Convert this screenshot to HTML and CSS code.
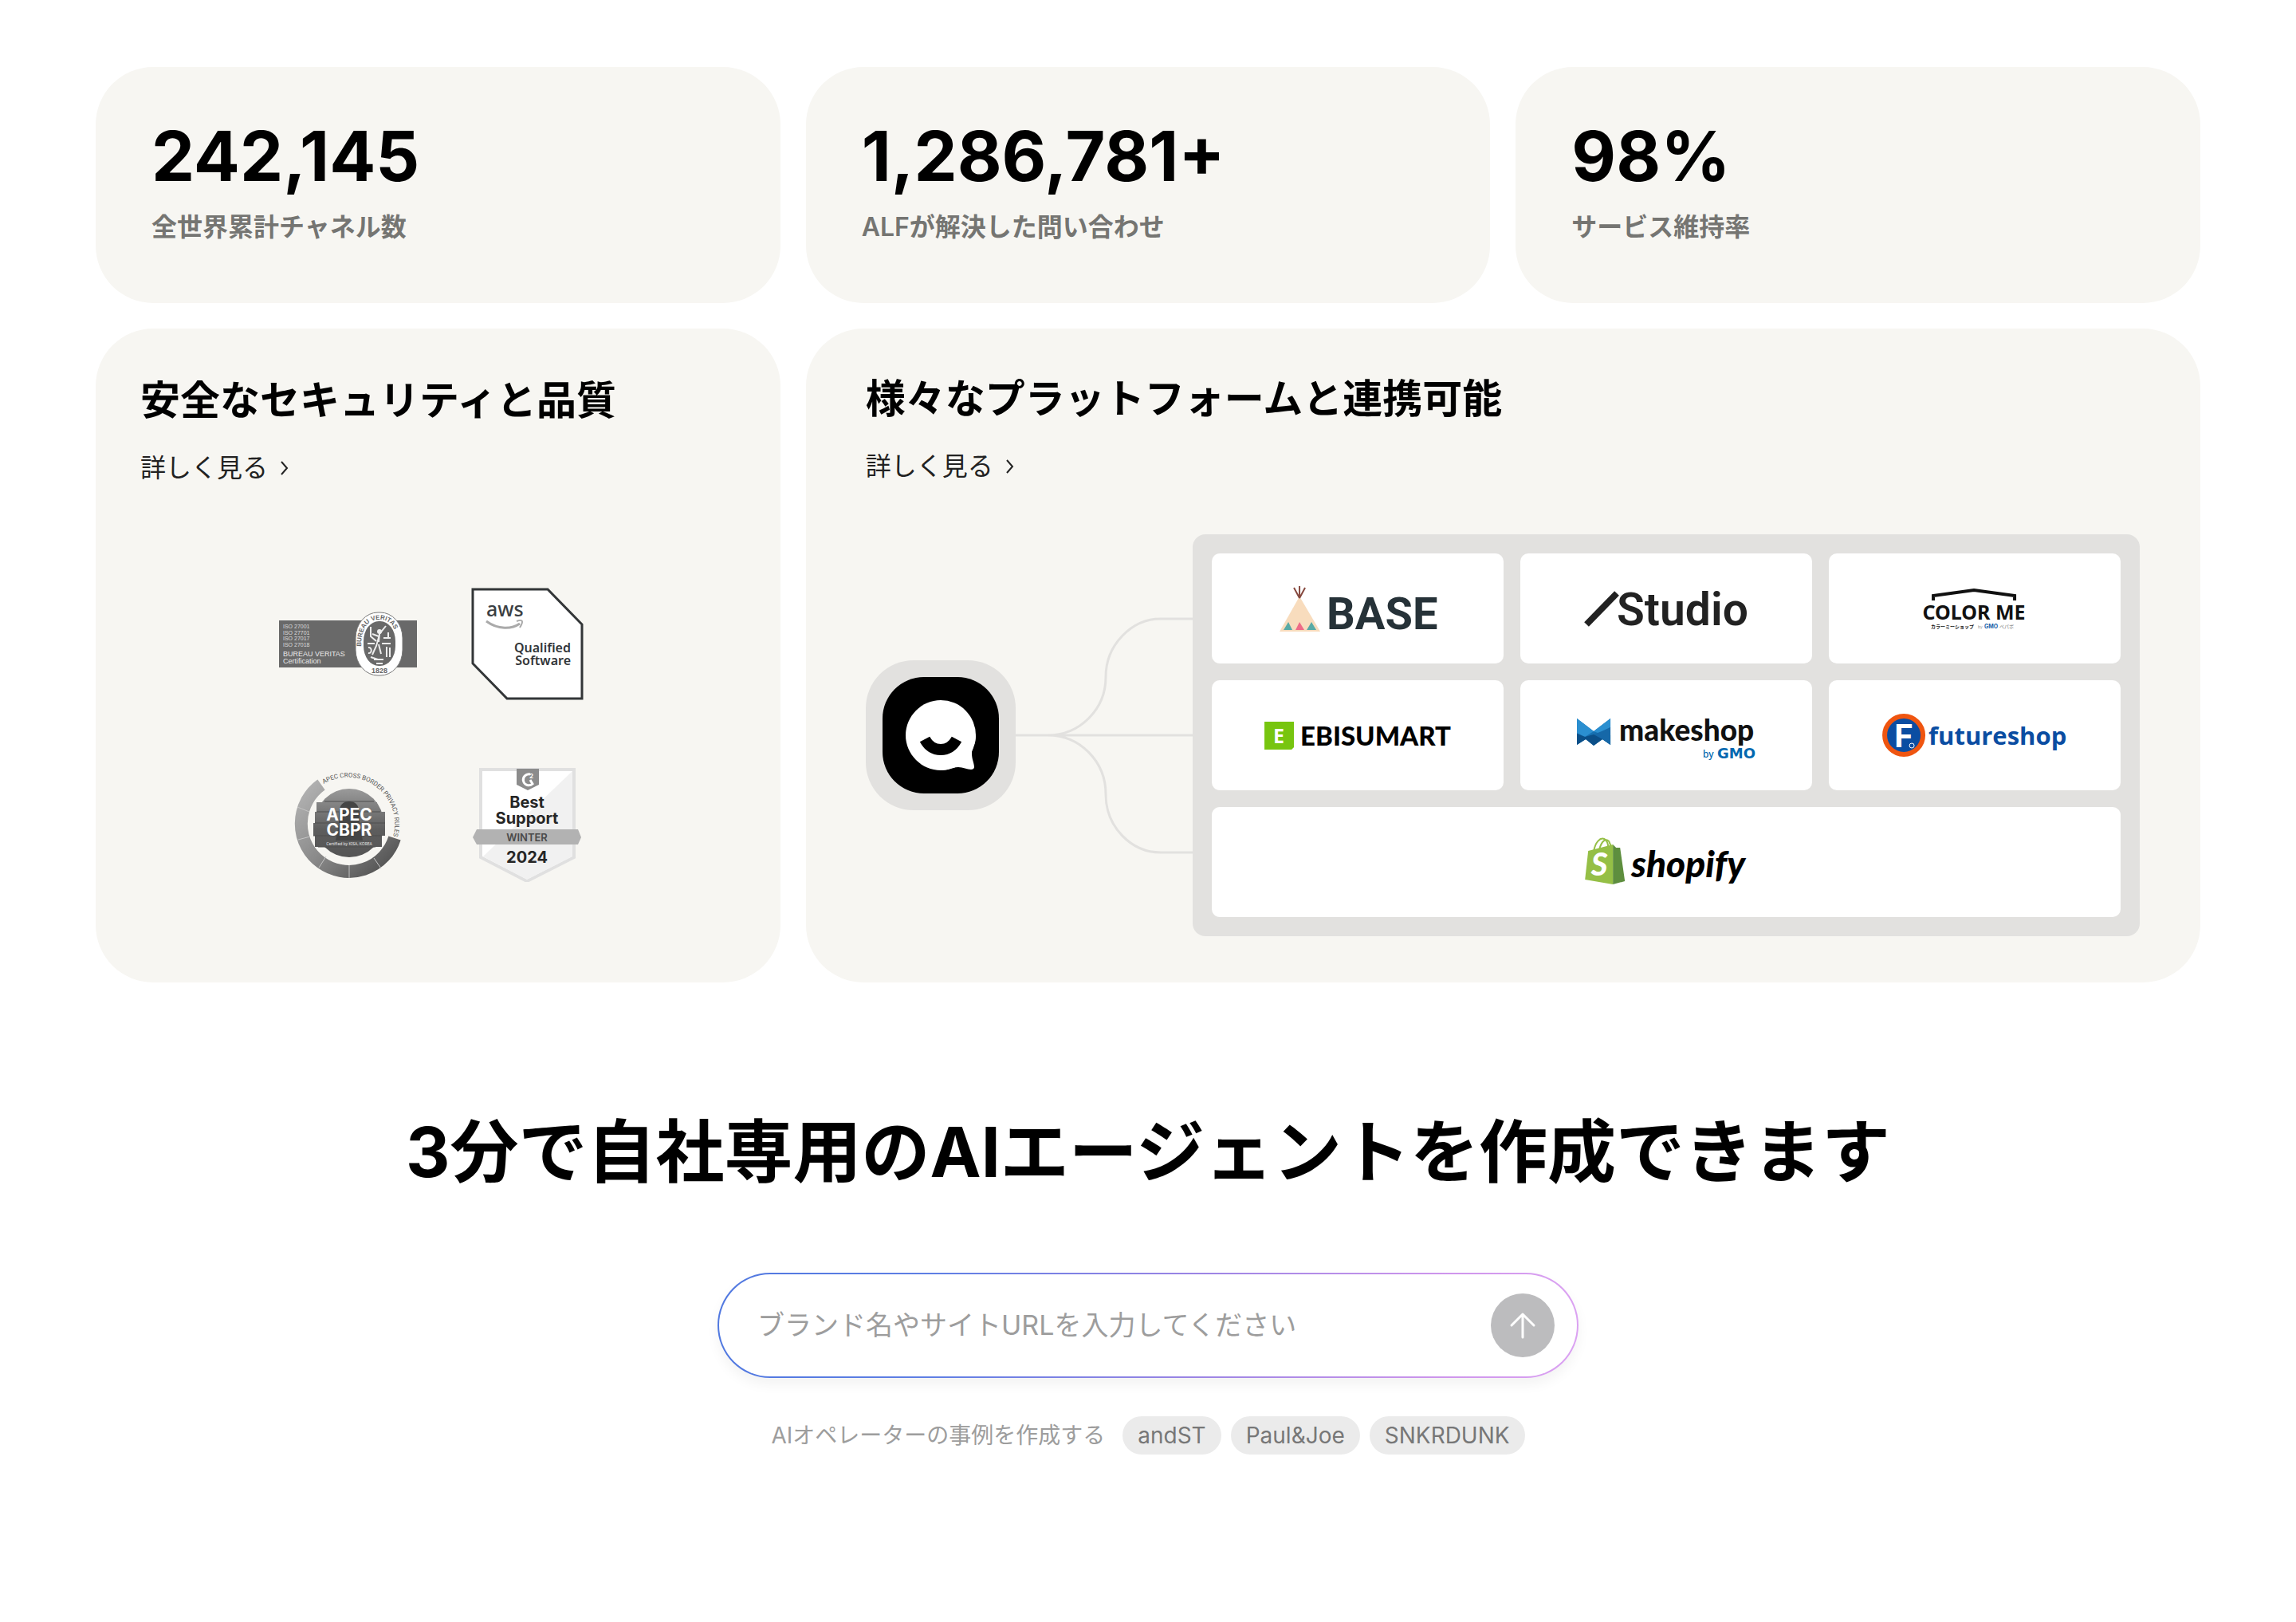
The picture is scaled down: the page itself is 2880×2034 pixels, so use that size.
FILE: index.html
```html
<!DOCTYPE html>
<html lang="ja">
<head>
<meta charset="utf-8">
<meta name="viewport" content="width=device-width, initial-scale=1">
<title>AIエージェント</title>
<link rel="stylesheet" href="styles.css">
</head>
<body>
<main class="page">
  <section class="cards">
    <div class="card stat">
      <p class="stat-value">242,145</p>
      <p class="stat-label">全世界累計チャネル数</p>
    </div>
    <div class="card stat">
      <p class="stat-value">1,286,781+</p>
      <p class="stat-label">ALFが解決した問い合わせ</p>
    </div>
    <div class="card stat">
      <p class="stat-value">98%</p>
      <p class="stat-label">サービス維持率</p>
    </div>

    <article class="card security">
      <h2 class="card-title">安全なセキュリティと品質</h2>
      <a class="more" href="#security">詳しく見る
        <svg class="chevron" viewBox="0 0 12 18" aria-hidden="true"><path d="M2 1l7 8-7 8"/></svg>
      </a>
      <div class="badges">
        <svg class="badge" viewBox="0 0 176 144" role="img" aria-label="Bureau Veritas">
          <rect x="1" y="42" width="173" height="59" fill="#696969"/>
          <g class="sans" fill="#dcdcdc" font-size="7">
            <text x="6" y="52">ISO 27001</text>
            <text x="6" y="60">ISO 27701</text>
            <text x="6" y="67">ISO 27017</text>
            <text x="6" y="75">ISO 27018</text>
          </g>
          <g class="sans" fill="#eaeaea" font-size="9">
            <text x="6" y="87">BUREAU VERITAS</text>
            <text x="6" y="96">Certification</text>
          </g>
          <rect x="97" y="32" width="59" height="79" rx="28" ry="32" fill="#fff" stroke="#777"/>
          <rect x="107" y="43" width="40" height="56" rx="19" ry="25" fill="#696969"/>
          <path id="bv-ring" d="M104 75C104 52 112 41 127 41S149 52 149 75" fill="none"/>
          <text class="sans" font-size="8" font-weight="700" fill="#666"><textPath href="#bv-ring">BUREAU VERITAS</textPath></text>
          <text class="sans" x="127" y="108" text-anchor="middle" font-size="9" font-weight="700" fill="#666">1828</text>
          <g fill="none" stroke="#eee" stroke-width="2">
            <path d="M116 50v12l7 6M135 49l-8 10-1 10M127 60l-4 14-5 11M126 72l3 12M118 59l8 3"/>
            <path d="M112 71h9M130 71h11M113 76c5-1 5 8 0 7M136 75v13M140 76v12M132 64h9M138 57v8M120 91h12M123 96h8M116 88l9 3"/>
          </g>
          <circle cx="127" cy="56" r="3" fill="#eee"/>
        </svg>
        <svg class="badge" viewBox="0 0 176 144" role="img" aria-label="AWS Qualified Software">
          <path d="M20 3h94l43 44v93H63l-43-44z" fill="#fff" stroke="#333638" stroke-width="3"/>
          <text class="noto" x="37" y="37" font-size="25" font-weight="500" fill="#3b3f44">aws</text>
          <path d="M37 43c15 11 32 10 42 3" fill="none" stroke="#aaa" stroke-width="3"/>
          <path d="M75 43c8-3 9 0 4 8" fill="none" stroke="#aaa" stroke-width="2"/>
          <g class="noto" font-size="16" font-weight="600" fill="#333639" text-anchor="end">
            <text x="143" y="82">Qualified</text>
            <text x="143" y="98">Software</text>
          </g>
        </svg>
        <svg class="badge" viewBox="0 0 176 144" role="img" aria-label="APEC CBPR">
          <defs>
            <linearGradient id="ring" x1="0" y1="0" x2="1" y2="1">
              <stop offset="0" stop-color="#b4b4b4"/><stop offset="0.5" stop-color="#8a8a8a"/><stop offset="1" stop-color="#4c4c4c"/>
            </linearGradient>
            <linearGradient id="globe" gradientUnits="userSpaceOnUse" x1="0" y1="27" x2="0" y2="113">
              <stop offset="0" stop-color="#9a9a9a"/><stop offset="0.6" stop-color="#5d5d5d"/><stop offset="1" stop-color="#555"/>
            </linearGradient>
            <path id="apec-arc" d="M57 21A59 59 0 0 1 140 98"/>
          </defs>
          <path d="M54 22A60 60 0 1 0 146 89" fill="none" stroke="url(#ring)" stroke-width="16"/>
          <path d="M24 50l15 6M25 91l15-4M51 126l9-14M89 139v-16M129 127l-9-13" stroke="#c4c4c4"/>
          <g fill="url(#globe)">
            <circle cx="89" cy="70" r="43"/>
            <rect x="48" y="44" width="76" height="12"/>
            <rect x="46" y="56" width="88" height="14"/>
            <rect x="44" y="70" width="90" height="16"/>
            <rect x="46" y="86" width="84" height="14"/>
          </g>
          <path d="M58 43h62M48 56h80M46 70h88M44 86h86M50 100h72" stroke="#4f4f4f"/>
          <path d="M76 60q0-17 13-17t13 17v12l4 20H72l4-20z" fill="#454545"/>
          <g class="inter" fill="#fff" font-weight="700" font-size="21" text-anchor="middle">
            <text x="89" y="67">APEC</text>
            <text x="89" y="86">CBPR</text>
          </g>
          <text class="noto" x="89" y="98" font-size="5" fill="#e8e8e8" text-anchor="middle">Certified by KISA, KOREA</text>
          <text class="roboto" font-size="8" fill="#555"><textPath href="#apec-arc">APEC CROSS BORDER PRIVACY RULES</textPath></text>
        </svg>
        <svg class="badge" viewBox="0 0 176 144" role="img" aria-label="G2 Best Support Winter 2024">
          <path d="M30 3h117v110l-59 30-58-30z" fill="#fff" stroke="#e0e0e0" stroke-width="4"/>
          <path d="M145 5v107l-57 29-55-29z" fill="#f1f1f1"/>
          <path d="M75 2h28v20l-14 7-14-7z" fill="#8c8c8c"/>
          <path d="M92 9a7 7 0 1 0 3 12l-3-5" fill="none" stroke="#fff" stroke-width="3"/>
          <text class="inter" x="91" y="14" font-size="8" font-weight="700" fill="#fff">2</text>
          <g class="inter" fill="#262626" font-weight="700" font-size="20" text-anchor="middle">
            <text x="88" y="51">Best</text>
            <text x="88" y="71">Support</text>
            <text x="88" y="120">2024</text>
          </g>
          <path d="M25 78h127l4 10-4 9H25l-5-9z" fill="#b2b2b2"/>
          <text class="inter" x="88" y="93" font-size="13" font-weight="600" fill="#4a4a4a" text-anchor="middle">WINTER</text>
        </svg>
      </div>
    </article>

    <article class="card platforms">
      <h2 class="card-title">様々なプラットフォームと連携可能</h2>
      <a class="more" href="#platforms">詳しく見る
        <svg class="chevron" viewBox="0 0 12 18" aria-hidden="true"><path d="M2 1l7 8-7 8"/></svg>
      </a>
      <div class="diagram">
        <div class="hub">
          <svg viewBox="0 0 146 146" role="img" aria-label="Channel">
            <rect width="146" height="146" rx="52" fill="#000"/>
            <path d="M73 29a44 44 0 1 1 0 88c-24 0-44-20-44-44s20-44 44-44z" fill="#fff"/>
            <path d="M117 73c0 12-5 14-5 23 0 7 3 12 3 17 0 2-2 3-4 3-5 0-10-3-16-3-9 0-12 4-22 4z" fill="#fff"/>
            <path d="M53 78q7 13 20 13t20-13" fill="none" stroke="#000" stroke-width="14"/>
          </svg>
        </div>
        <svg class="links" viewBox="0 0 222 504" aria-hidden="true">
          <path d="M0 252h222M40 252C81 252 113 219 113 179S145 106 182 106h40M40 252C81 252 113 285 113 326S145 399 182 399h40"/>
        </svg>
        <div class="tiles">
          <div class="tile">
            <svg viewBox="0 0 366 138" role="img" aria-label="BASE">
              <path d="M110 54L136 98H85z" fill="#f8dcbd"/>
              <path d="M110 56V41M110 56l-7-13M110 56l7-13" fill="none" stroke="#86493f" stroke-width="2"/>
              <path d="M90 96l6-10 5 10zM119 96l6-10 6 10z" fill="#58aaa6"/>
              <path d="M105 96l5-10 6 10z" fill="#ee6b87"/>
              <text class="roboto" x="144" y="95" font-size="56" font-weight="700" fill="#263238">BASE</text>
            </svg>
          </div>
          <div class="tile">
            <svg viewBox="0 0 366 138" role="img" aria-label="Studio">
              <path d="M83 89l38-39" stroke="#222" stroke-width="8"/>
              <text class="roboto" x="121" y="90" font-size="57" font-weight="600" fill="#222">Studio</text>
            </svg>
          </div>
          <div class="tile">
            <svg viewBox="0 0 366 138" role="img" aria-label="COLOR ME">
              <path d="M131 59v-6l51-7 51 7v6" fill="none" stroke="#111" stroke-width="4"/>
              <text class="noto" x="182" y="83" font-size="25" font-weight="700" fill="#111" text-anchor="middle">COLOR ME</text>
              <text class="inter" x="128" y="94" font-size="6" font-weight="700" fill="#111">カラーミーショップ</text>
              <text class="inter" x="187" y="94" font-size="5" fill="#999">by</text>
              <text class="inter" x="195" y="94" font-size="7" font-weight="700" fill="#1a5fa8">GMO</text>
              <text class="inter" x="214" y="94" font-size="6" fill="#777">ペパボ</text>
            </svg>
          </div>
          <div class="tile">
            <svg viewBox="0 0 366 138" role="img" aria-label="EBISUMART">
              <path d="M66 52h37v32l-3 3H66z" fill="#77c50f"/>
              <text class="noto" x="84" y="79" font-size="25" font-weight="700" fill="#fff" text-anchor="middle">E</text>
              <text class="lato" x="111" y="82" font-size="33" font-weight="900" fill="#000">EBISUMART</text>
            </svg>
          </div>
          <div class="tile">
            <svg viewBox="0 0 366 138" role="img" aria-label="makeshop by GMO">
              <path d="M71 48l21 16 21-16v33l-10-7-11 8-10-8-11 7z" fill="#1670b1"/>
              <path d="M71 48l21 16-11 7-10-5zM113 48L92 64l10 4 11-9z" fill="#2b8fd0"/>
              <path d="M71 67l10 4 11-3 21 1v12l-10-7-11 8-10-8-11 7z" fill="#0b4f88"/>
              <path d="M92 68l10-4 11-5v22l-10-7z" fill="#1668a8"/>
              <text class="lato" x="124" y="76" font-size="37" font-weight="900" fill="#111">makeshop</text>
              <text class="noto" x="229" y="97" font-size="12" font-weight="500" fill="#0068b0">by</text>
              <text class="dejavu" x="295" y="98" font-size="18" font-weight="700" fill="#0068b0" text-anchor="end">GMO</text>
            </svg>
          </div>
          <div class="tile">
            <svg viewBox="0 0 366 138" role="img" aria-label="futureshop">
              <circle cx="94" cy="69" r="24" fill="#0a4da2" stroke="#ef5510" stroke-width="6"/>
              <text class="inter" x="94" y="84" font-size="40" font-weight="700" fill="#fff" text-anchor="middle">F</text>
              <circle cx="104" cy="82" r="3" fill="none" stroke="#fff"/>
              <text class="open" x="125" y="81" font-size="31" font-weight="700" fill="#0a4da2">futureshop</text>
            </svg>
          </div>
          <div class="tile tile-wide">
            <svg viewBox="0 0 366 138" role="img" aria-label="shopify">
              <path d="M92 55c2-11 8-17 13-15 4 2 5 6 5 11M99 53c3-11 8-14 12-10l3 7" fill="none" stroke="#95bf46" stroke-width="2"/>
              <path d="M85 55l31-8v50l-35-6z" fill="#95bf46"/>
              <path d="M116 47l4 4h5l6 42-15 4z" fill="#5e8e3e"/>
              <text class="lato" x="99" y="86" font-size="40" font-weight="900" font-style="italic" fill="#fff" text-anchor="middle">S</text>
              <text class="lato" x="139" y="88" font-size="46" font-weight="900" font-style="italic" fill="#000">shopify</text>
            </svg>
          </div>
        </div>
      </div>
    </article>
  </section>

  <section class="cta">
    <h1 class="cta-title">3分で自社専用のAIエージェントを作成できます</h1>
    <form class="prompt">
      <input class="prompt-input" type="text" placeholder="ブランド名やサイトURLを入力してください" aria-label="ブランド名やサイトURL">
      <button class="prompt-send" type="button" aria-label="送信">
        <svg viewBox="0 0 36 36" aria-hidden="true"><path d="M18 33V4M4 18L18 4l14 14"/></svg>
      </button>
    </form>
    <div class="examples">
      <span class="examples-label">AIオペレーターの事例を作成する</span>
      <button class="pill" type="button">andST</button>
      <button class="pill" type="button">Paul&amp;Joe</button>
      <button class="pill" type="button">SNKRDUNK</button>
    </div>
  </section>
</main>
</body>
</html>
```
FILE: styles.css
```css
*,
*::before,
*::after {
  box-sizing: border-box;
}

body {
  margin: 0;
  background: #fff;
  color: #000;
  font-family: Inter, "Noto Sans CJK JP", sans-serif;
}

h1,
h2,
p {
  margin: 0;
}

button,
input {
  font: inherit;
}

.page {
  padding: 84px 120px;
}

.cards {
  display: grid;
  grid-template-columns: repeat(3, minmax(0, 1fr));
  gap: 32px;
}

.card {
  border-radius: 72px;
  background: #f7f6f2;
}

.stat {
  display: flex;
  flex-direction: column;
  gap: 13px;
  padding: 60px 70px 71px;
}

.stat-value {
  font-size: 86px;
  font-weight: 700;
  line-height: 104px;
}

.stat-label {
  color: #757572;
  font-size: 32px;
  font-weight: 600;
  line-height: 48px;
}

.security,
.platforms {
  display: flex;
  flex-direction: column;
  align-items: flex-start;
}

.security {
  padding: 58px 56px 56px;
}

.platforms {
  grid-column: span 2;
  padding: 56px 76px 58px 75px;
}

.card-title {
  font-size: 50px;
  font-weight: 600;
  line-height: 64px;
}

.more {
  display: flex;
  align-items: center;
  gap: 15px;
  margin-top: 29px;
  color: #222;
  font-size: 32px;
  line-height: 48px;
  text-decoration: none;
}

.chevron {
  width: 12px;
  height: 18px;
  fill: none;
  stroke: #222;
  stroke-width: 2;
}

.badges {
  display: grid;
  grid-template-columns: repeat(2, 176px);
  gap: 82px 48px;
  align-self: center;
  margin-top: 125px;
}

.badge {
  width: 176px;
  height: 144px;
}

.sans { font-family: "Liberation Sans", sans-serif; }
.noto { font-family: "Noto Sans", sans-serif; }
.inter { font-family: Inter, "Noto Sans CJK JP", sans-serif; }
.roboto { font-family: Roboto, sans-serif; }
.lato { font-family: Lato, sans-serif; }
.open { font-family: "Open Sans", sans-serif; }
.dejavu { font-family: "DejaVu Sans", sans-serif; }

.diagram {
  display: flex;
  align-items: center;
  align-self: stretch;
  margin-top: 61px;
}

.hub {
  flex: none;
  display: grid;
  place-items: center;
  width: 188px;
  height: 188px;
  border-radius: 60px;
  background: #e2e1df;
}

.hub svg {
  width: 146px;
  height: 146px;
}

.links {
  flex: none;
  width: 222px;
  height: 504px;
  fill: none;
  stroke: #e2e1df;
  stroke-width: 3;
}

.tiles {
  flex: 1;
  display: grid;
  grid-template-columns: repeat(3, minmax(0, 1fr));
  gap: 21px;
  padding: 24px;
  border-radius: 16px;
  background: #e2e1df;
}

.tile {
  display: grid;
  place-items: center;
  border-radius: 10px;
  background: #fff;
}

.tile svg {
  width: 100%;
  height: 138px;
}

.tile-wide {
  grid-column: 1 / -1;
}

.cta {
  display: flex;
  flex-direction: column;
  align-items: center;
  padding-top: 157px;
}

.cta-title {
  font-size: 86px;
  font-weight: 700;
  line-height: 112px;
  text-align: center;
}

.prompt {
  display: flex;
  align-items: center;
  width: 100%;
  max-width: 1080px;
  height: 132px;
  margin-top: 95px;
  padding: 0 28px 0 48px;
  border: 2px solid transparent;
  border-radius: 66px;
  background:
    linear-gradient(#fff, #fff) padding-box,
    linear-gradient(90deg, #5078e0 0%, #5f7fe4 25%, #9a84e4 55%, #cf96ec 85%, #dba2f2 100%) border-box;
  box-shadow: 0 8px 16px rgba(0, 0, 0, 0.05);
}

.prompt-input {
  flex: 1;
  min-width: 0;
  height: 100%;
  padding: 0 0 2px;
  border: 0;
  outline: 0;
  background: transparent;
  color: #000;
  font-size: 34px;
}

.prompt-input::placeholder {
  color: #9d9d9d;
  opacity: 1;
}

.prompt-send {
  flex: none;
  display: grid;
  place-items: center;
  width: 80px;
  height: 80px;
  padding: 0;
  border: 0;
  border-radius: 50%;
  background: #bcbcbe;
}

.prompt-send svg {
  width: 36px;
  height: 36px;
  fill: none;
  stroke: #fff;
  stroke-width: 3;
  stroke-linecap: round;
  stroke-linejoin: round;
}

.examples {
  display: flex;
  align-items: center;
  gap: 12px;
  margin-top: 48px;
}

.examples-label {
  margin-right: 10px;
  color: #9d9d9d;
  font-size: 28px;
  line-height: 48px;
}

.pill {
  height: 48px;
  padding: 0 19px;
  border: 0;
  border-radius: 24px;
  background: #ebebeb;
  color: #777;
  font-size: 28px;
  line-height: 48px;
}
```
